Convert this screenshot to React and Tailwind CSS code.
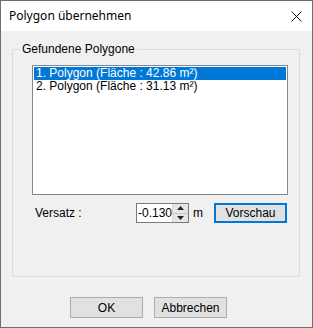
import React from 'react';

const polygons = [
  { id: 1, flaeche: '42.86' },
  { id: 2, flaeche: '31.13' },
];

const App = () => {
  return (
    <div className="w-[313px] h-[328px] border border-[#6f6f6f] bg-[#f0f0f0] flex flex-col font-['Liberation_Sans',Arial,sans-serif] text-[12px] text-black">
      {/* Titelleiste */}
      <div className="h-[30px] bg-white flex items-center justify-between pl-[8px] pr-[10px] shrink-0">
        <span className="text-[12px] font-['Noto_Sans',sans-serif] leading-none">Polygon übernehmen</span>
        <svg width="11" height="11" viewBox="0 0 11 11" className="mt-[1px]">
          <path d="M0.5 0.5 L10.5 10.5 M10.5 0.5 L0.5 10.5" stroke="#111" strokeWidth="1" fill="none" />
        </svg>
      </div>

      <div className="flex-1 flex flex-col pt-[12px] pl-[11px]">
        <fieldset className="w-[288px] h-[234px] border border-[#dcdcdc] m-0 p-0">
          <legend className="ml-[7px] px-[2px] leading-[13px]">Gefundene Polygone</legend>
          <div className="pl-[19px] pt-[9px]">
            {/* Liste */}
            <div className="w-[256px] h-[130px] border border-[#828790] bg-white p-[1px]">
              {polygons.map((p, i) => (
                <div
                  key={p.id}
                  className={
                    i === 0
                      ? 'h-[13px] leading-[13px] pl-[2px] bg-[#0078d7] text-white'
                      : 'h-[13px] leading-[13px] pl-[2px]'
                  }
                >
                  {p.id}. Polygon (Fläche : {p.flaeche} m²)
                </div>
              ))}
            </div>

            {/* Versatz */}
            <div className="flex items-center mt-[8px] h-[20px]">
              <span className="w-[104px] pl-[3px]">Versatz :</span>
              <div className="flex h-[20px] w-[53px] border border-[#7a7a7a] bg-white">
                <div className="flex-1 leading-[18px] pl-[1px]">-0.130</div>
                <div className="w-[17px] flex flex-col border-l border-[#d4d4d4]">
                  <div className="flex-1 bg-[#e5e5e5] border-b border-[#c8c8c8] flex items-center justify-center">
                    <svg width="7" height="4" viewBox="0 0 7 4"><path d="M3.5 0 L7 4 L0 4 Z" fill="#222" /></svg>
                  </div>
                  <div className="flex-1 bg-[#e5e5e5] flex items-center justify-center">
                    <svg width="7" height="4" viewBox="0 0 7 4"><path d="M0 0 L7 0 L3.5 4 Z" fill="#222" /></svg>
                  </div>
                </div>
              </div>
              <span className="ml-[4px] w-[21px]">m</span>
              <button className="w-[73px] h-[20px] border-2 border-[#0078d7] bg-[#e1e1e1] leading-none">
                Vorschau
              </button>
            </div>
          </div>
        </fieldset>

        {/* Buttons */}
        <div className="flex gap-[11px] pl-[58px] mt-[20px]">
          <button className="w-[73px] h-[21px] border border-[#adadad] bg-[#e1e1e1] leading-none">OK</button>
          <button className="w-[73px] h-[21px] border border-[#adadad] bg-[#e1e1e1] leading-none">Abbrechen</button>
        </div>
      </div>
    </div>
  );
};

export default App;
